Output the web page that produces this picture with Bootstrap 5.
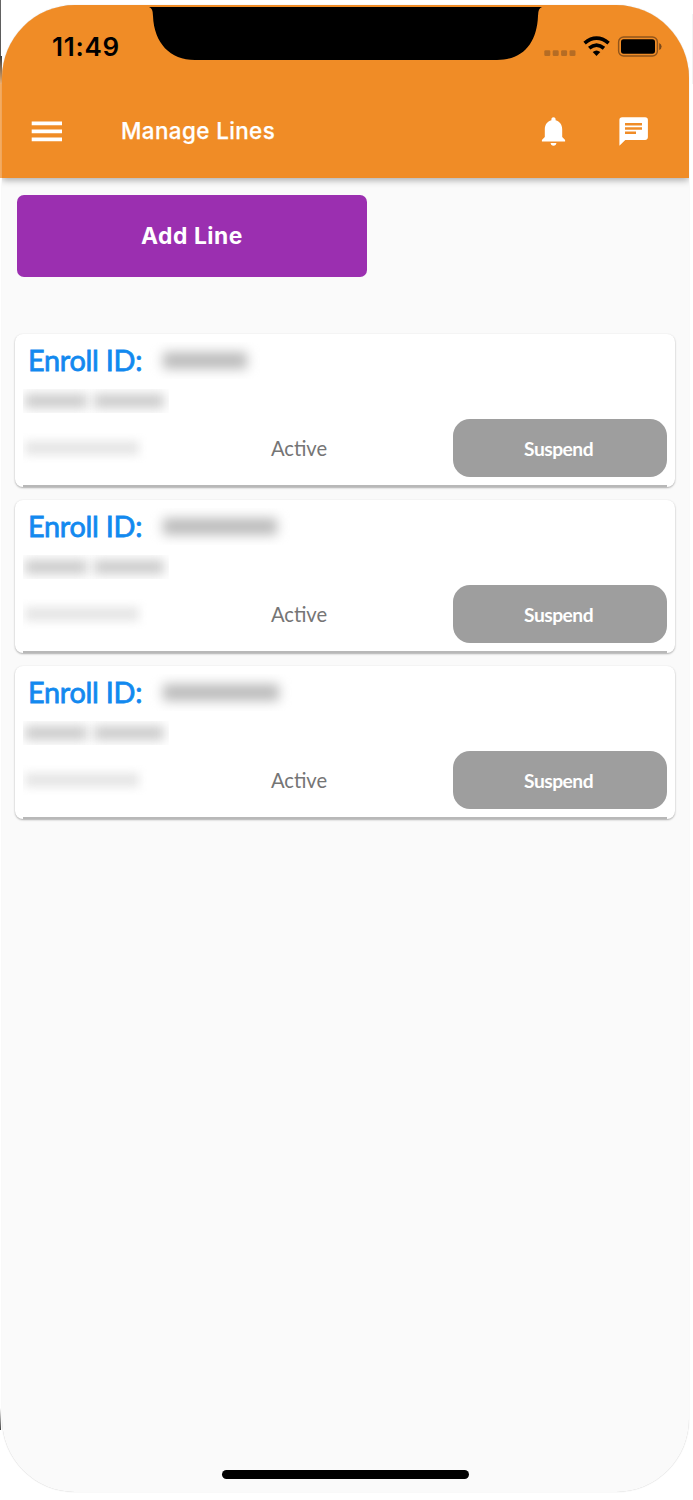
<!DOCTYPE html>
<html lang="en">
<head>
<meta charset="utf-8">
<meta name="viewport" content="width=device-width, initial-scale=1">
<title>Manage Lines</title>
<link href="https://cdn.jsdelivr.net/npm/bootstrap@5.3.0/dist/css/bootstrap.min.css" rel="stylesheet">
<style>
  body { background: #fff; font-family: Lato, "Liberation Sans", sans-serif; }
  .stage { height: 1500px; padding: 5px 4px 8px 0; overflow: hidden; background:
      linear-gradient(#666, #555) 0 0 / 1px 56px no-repeat,
      linear-gradient(#3c3c3c, #f0b070) 0 56px / 2px 28px no-repeat,
      linear-gradient(#f5ab60, #f5ab60) 0 84px / 2px 94px no-repeat,
      linear-gradient(#fff, #444) 0 1408px / 1px 22px no-repeat,
      linear-gradient(#f3f3f3, #f3f3f3) 692px 14px / 1px 70px no-repeat, #fff; }
  .phone { background: #fafafa; border-radius: 73px; margin-left: 2px; height: 1487px; width: 687px; overflow: hidden; box-shadow: 0 0 1px rgba(0,0,0,.25); }
  .topbar { background: #f08c26; height: 173px; box-shadow: 0 2px 7px rgba(0,0,0,.34); }
  .statusbar { height: 56px; }
  .clock { width: 146px; padding: 25px 0 0 50px; font: 600 26px/34px Inter, sans-serif; letter-spacing: .75px; color: #000; }
  .signals { margin: 30px 0 0 1px; }
  .appbar { height: 117px; padding-left: 29px; }
  .menu-icon { margin-top: 16px; }
  .screen-title { font: 500 22.4px/30px Inter, sans-serif; letter-spacing: .4px; color: #fff; -webkit-text-stroke: .25px #fff; margin: 55px 0 0 58px; width: 170px; white-space: nowrap; }
  .action-icons { margin-left: 248px; }
  .content-area { padding: 17px 14px 0 13px; }
  .btn-add { width: 350px; height: 82px; margin-left: 2px; padding: 6px 12px 6px; border-radius: 7px; border: 0; background: #9b2fb0; color: #fff; font: 700 22.8px/30px Inter, sans-serif; letter-spacing: .55px; }
  .btn-add:hover { background: #8a279e; color: #fff; }
  .line-list { margin-top: 57px; gap: 13px; }
  .line-card { height: 153px; background: #fff; border: 0; border-radius: 8px; box-shadow: 0 1px 2px rgba(0,0,0,.3), 0 0 2px rgba(0,0,0,.04); padding: 8px 8px 0 8px; }
  .card-rule { height: 2px; background: #b8b8b8; margin-top: 8px; }
  .enroll-label { color: #1289ef; font-weight: 400; font-size: 28.8px; line-height: 35px; -webkit-text-stroke: .8px #1289ef; letter-spacing: -.25px; margin-left: 5px; padding-top: 1px; width: 115px; white-space: nowrap; }
  .mask { overflow: hidden; }
  .mask span { display: block; filter: blur(6px); }
  .mask-id { height: 37px; width: 150px; padding: 10px 0 0 20px; }
  .mask-id span { height: 17px; background: #bcbcbc; }
  .mask-name { height: 24px; width: 146px; padding: 5px 0 0 2px; margin-top: 10px; }
  .mask-name span { height: 14px; width: 62px; background: #cbcbcb; filter: blur(5.5px); }
  .mask-name span + span { width: 70px; margin-left: 7px; }
  .mask-phone { height: 30px; width: 124px; padding: 8px 0 0 2px; }
  .mask-phone span { height: 14px; width: 114px; background: #e6e6e6; filter: blur(5px); }
  .line-row { height: 58px; margin-top: 6px; }
  .line-status { color: #757575; font-size: 20.2px; line-height: 26px; margin-left: 124px; width: 182px; }
  .btn-suspend { width: 214px; height: 58px; border: 0; border-radius: 17px; background: #9e9e9e; color: #fff; font-weight: 700; font-size: 19.2px; line-height: 24px; letter-spacing: -.5px; padding: 1px 3px 0 0; margin-left: .5px; }
  .btn-suspend:hover { background: #8e8e8e; color: #fff; }
  .home-pill { width: 247px; height: 9px; border-radius: 5px; background: #000; margin: 0 0 12.6px -1px; }
</style>
</head>
<body>
<div class="stage">
  <div class="phone d-flex flex-column">
    <header class="topbar flex-shrink-0">
      <div class="statusbar d-flex align-items-start">
        <div class="clock flex-shrink-0">11:49</div>
        <svg class="flex-shrink-0" width="394" height="56" viewBox="148 5 394 56" aria-hidden="true">
          <path d="M149 7H542Q538 8 538 16C537 43 523 60 497 60H195C170 60 154 43 153 16Q153 8 149 7Z" fill="#000"/>
        </svg>
        <svg class="signals flex-shrink-0" width="122" height="24" viewBox="543 35 122 24" aria-hidden="true">
          <g fill="#b56c24"><rect x="544.3" y="50.2" width="6" height="5.8" rx="1.3"/><rect x="552.7" y="50.2" width="6" height="5.8" rx="1.3"/><rect x="561.1" y="50.2" width="6" height="5.8" rx="1.3"/><rect x="569.5" y="50.2" width="6" height="5.8" rx="1.3"/></g>
          <g fill="none" stroke="#000" stroke-width="3.7"><path d="M584.6 43.1Q596.5 33.2 608.6 43.1"/><path d="M589.2 48.2Q596.5 42.1 604 48.2"/></g>
          <path d="M596.5 56L592.7 52.1Q596.5 48.9 600.3 52.1Z"/>
          <rect x="618.6" y="37" width="38.8" height="19" rx="5" fill="none" stroke="#8f541b" stroke-width="1.4"/>
          <rect x="621" y="39.3" width="34" height="14.4" rx="2.6"/>
          <path d="M659.2 43Q661.6 44 661.6 46.5T659.2 50Z" fill="#7a491b"/>
        </svg>
      </div>
      <nav class="appbar d-flex align-items-start" aria-label="Main">
        <svg class="menu-icon flex-shrink-0" width="32" height="100" viewBox="31 77 32 100" aria-hidden="true"><path d="M31.7 121.4h30.3v3.8H31.7zm0 8h30.3v3.8H31.7zm0 8h30.3v3.8H31.7z" fill="#fff"/></svg>
        <h1 class="screen-title">Manage Lines</h1>
        <svg class="action-icons flex-shrink-0" width="115" height="117" viewBox="539 61 115 117" fill="#fff" aria-hidden="true">
          <path d="M553.5 145.8c1.6 0 2.9-1.2 2.9-2.8h-5.8c0 1.6 1.3 2.8 2.9 2.8zM562.2 137v-7.5c0-4.5-2.4-8.2-6.6-9.2v-1c0-1.2-.9-2.1-2.1-2.1s-2.1.9-2.1 2.1v1c-4.2 1-6.6 4.7-6.6 9.2v7.5l-2.9 3v1.5h23.2V140z"/>
          <path fill-rule="evenodd" d="M622.2 117.3h22.9q2.8 0 2.8 2.8v17q0 2.8-2.8 2.8h-19.8l-5.9 5.8v-25.6q0-2.8 2.8-2.8zM625 123v2.5h17V123zM625 127.3v2.5h17v-2.5zM625 131.6v2.5h11v-2.5z"/>
        </svg>
      </nav>
    </header>

    <main class="content-area flex-grow-1">
      <button type="button" class="btn btn-add d-block">Add Line</button>

      <div class="line-list d-flex flex-column">
        <section class="card line-card">
          <div class="d-flex"><div class="enroll-label">Enroll ID:</div><div class="mask mask-id"><span style="width:84px"></span></div></div>
          <div class="mask mask-name d-flex"><span></span><span></span></div>
          <div class="line-row d-flex align-items-center"><div class="mask mask-phone"><span></span></div><div class="line-status">Active</div><button type="button" class="btn btn-suspend">Suspend</button></div>
          <div class="card-rule"></div>
        </section>
        <section class="card line-card">
          <div class="d-flex"><div class="enroll-label">Enroll ID:</div><div class="mask mask-id"><span style="width:114px"></span></div></div>
          <div class="mask mask-name d-flex"><span></span><span></span></div>
          <div class="line-row d-flex align-items-center"><div class="mask mask-phone"><span></span></div><div class="line-status">Active</div><button type="button" class="btn btn-suspend">Suspend</button></div>
          <div class="card-rule"></div>
        </section>
        <section class="card line-card">
          <div class="d-flex"><div class="enroll-label">Enroll ID:</div><div class="mask mask-id"><span style="width:116px"></span></div></div>
          <div class="mask mask-name d-flex"><span></span><span></span></div>
          <div class="line-row d-flex align-items-center"><div class="mask mask-phone"><span></span></div><div class="line-status">Active</div><button type="button" class="btn btn-suspend">Suspend</button></div>
          <div class="card-rule"></div>
        </section>
      </div>
    </main>
    <div class="home-pill align-self-center flex-shrink-0"></div>
  </div>
</div>
<script src="https://cdn.jsdelivr.net/npm/bootstrap@5.3.0/dist/js/bootstrap.bundle.min.js"></script>
</body>
</html>
